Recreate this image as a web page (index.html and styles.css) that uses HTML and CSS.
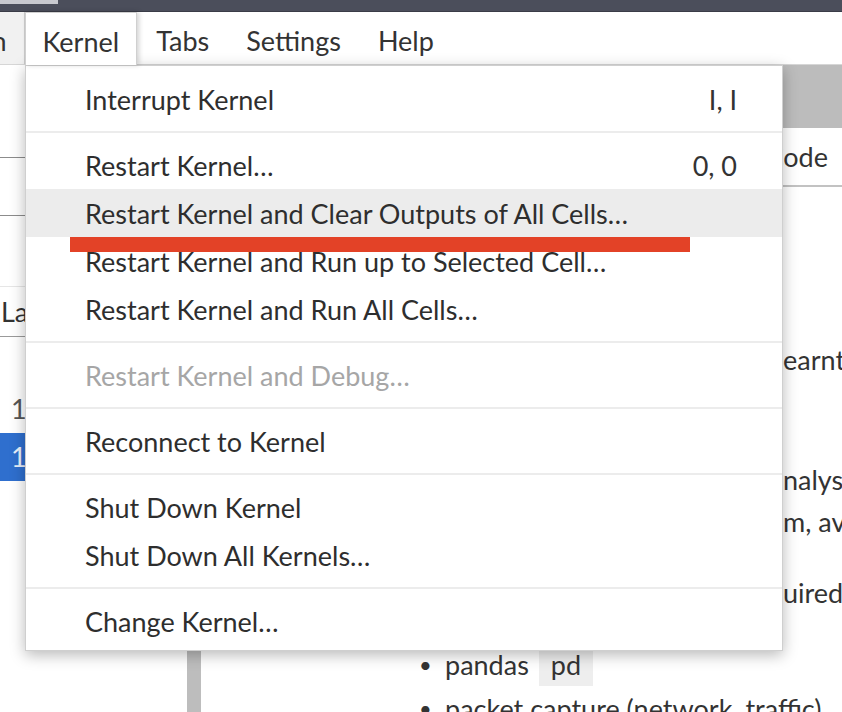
FILE: index.html
```html
<!DOCTYPE html>
<html lang="en">
<head>
<meta charset="utf-8">
<title>Kernel menu</title>
<link rel="stylesheet" href="styles.css">
</head>
<body>
<div class="app">
  <div class="topbar"><div class="topbar-left"></div></div>
  <nav class="menubar">
    <div class="mb-item mb-run">Run</div>
    <div class="mb-item mb-active">Kernel</div>
    <div class="mb-item">Tabs</div>
    <div class="mb-item">Settings</div>
    <div class="mb-item">Help</div>
  </nav>
  <div class="main">
    <aside class="sidebar">
      <div class="sb-tools"></div>
      <div class="sb-crumbs"></div>
      <div class="sb-filter"></div>
      <div class="sb-header">Last Modified</div>
      <div class="sb-row"></div>
      <div class="sb-row">1 day ago</div>
      <div class="sb-row sb-selected">1 day ago</div>
    </aside>
    <section class="notebook">
      <div class="nb-tabs"></div>
      <div class="nb-toolbar"><span class="celltype">Code</span></div>
      <div class="nb-content">
        <div class="collapser"></div>
        <div class="md">
          <div class="ln p1"><span class="hid"><span>In this notebook we put into practice what we have l</span></span><span>earnt</span></div>
          <div class="ln p2"><span class="hid"><span>We use a sample of network traffic data to perform an a</span></span><span>nalyse of the flows</span></div>
          <div class="ln"><span class="hid"><span>and compute simple statistics (minimum, maximu</span></span><span>m, average)</span></div>
          <div class="ln p3"><span class="hid"><span>The following libraries and data are req</span></span><span>uired:</span></div>
          <ul class="list">
            <li><span class="bullet">•</span><span>pandas</span><code class="code">pd</code></li>
            <li><span class="bullet">•</span><span>packet capture (network, traffic)</span></li>
          </ul>
        </div>
      </div>
    </section>
  </div>

  <div class="menu">
    <div class="mi"><span>Interrupt Kernel</span><span class="sc">I, I</span></div>
    <div class="sep"></div>
    <div class="mi"><span>Restart Kernel…</span><span class="sc">0, 0</span></div>
    <div class="mi mi-hover"><span>Restart Kernel and Clear Outputs of All Cells…</span></div>
    <div class="mi"><span>Restart Kernel and Run up to Selected Cell…</span></div>
    <div class="mi"><span>Restart Kernel and Run All Cells…</span></div>
    <div class="sep"></div>
    <div class="mi mi-disabled"><span>Restart Kernel and Debug…</span></div>
    <div class="sep"></div>
    <div class="mi"><span>Reconnect to Kernel</span></div>
    <div class="sep"></div>
    <div class="mi"><span>Shut Down Kernel</span></div>
    <div class="mi"><span>Shut Down All Kernels…</span></div>
    <div class="sep"></div>
    <div class="mi"><span>Change Kernel…</span></div>
  </div>

  <div class="annotation"></div>
</div>
</body>
</html>
```

FILE: styles.css
```css
* { box-sizing: border-box; margin: 0; padding: 0; }

html, body {
  width: 842px;
  height: 712px;
  overflow: hidden;
}

body {
  font-family: Lato, "Open Sans", "Noto Sans", sans-serif;
  font-size: 27px;
  color: #333333;
  background: #ffffff;
}

.app {
  position: relative;
  width: 842px;
  height: 712px;
  overflow: hidden;
  display: flex;
  flex-direction: column;
}

/* top dark bar */
.topbar {
  height: 12px;
  flex: none;
  background: #4b4e5b;
  border-bottom: 1px solid #3a3c47;
  display: flex;
}
.topbar-left {
  width: 58px;
  height: 4px;
  background: #c8c9cf;
}

/* menubar */
.menubar {
  height: 53px;
  flex: none;
  display: flex;
  align-items: stretch;
  background: #ffffff;
  border-bottom: 1px solid #d6d6d6;
}
.mb-item {
  display: flex;
  align-items: center;
  padding: 5px 18px 0 19px;
  color: #333333;
  white-space: nowrap;
}
.mb-run {
  margin-left: -59px;
  background: #f1f1f1;
  border-right: 1px solid #cccccc;
}
.mb-active {
  position: relative;
  z-index: 20;
  background: #ffffff;
  border: 1px solid #d0d0d0;
  border-bottom: none;
  margin-bottom: -1px;
  padding: 5px 17px 0 16px;
  box-shadow: 2px 0 5px rgba(0, 0, 0, 0.18);
}

/* main area */
.main {
  flex: 1;
  display: flex;
  min-height: 0;
}

.sidebar {
  width: 160px;
  flex: none;
  background: #ffffff;
  display: flex;
  flex-direction: column;
}
.sb-tools {
  height: 93px;
  border-bottom: 1px solid #8c8c8c;
}
.sb-crumbs {
  height: 58px;
  border-bottom: 1px solid #8c8c8c;
}
.sb-filter {
  height: 71px;
  border-bottom: 1px solid #e6e6e6;
}
.sb-header {
  height: 50px;
  line-height: 49px;
  padding-left: 1px;
  border-bottom: 1px solid #9a9a9a;
  color: #333333;
  white-space: nowrap;
}
.sb-row {
  height: 48px;
  line-height: 48px;
  padding-left: 11px;
  color: #555555;
  white-space: nowrap;
}
.sb-row:first-of-type { height: 50px; }
.sb-selected {
  background: #2f6fce;
  color: #e8f0fb;
}

.notebook {
  flex: 1;
  display: flex;
  flex-direction: column;
  min-width: 0;
}
.nb-tabs {
  height: 63px;
  flex: none;
  background: #bcbcbc;
}
.nb-toolbar {
  height: 59px;
  flex: none;
  display: flex;
  align-items: center;
  justify-content: flex-end;
  padding-right: 14px;
  background: #ffffff;
  border-bottom: 2px solid #c2c2c2;
}
.celltype { color: #333333; }

.nb-content {
  flex: 1;
  display: flex;
  padding-left: 27px;
}
.collapser {
  width: 14px;
  flex: none;
  background: #bdbdbd;
}
.md {
  flex: 1;
  padding-left: 29px;
  padding-top: 152px;
  min-width: 0;
}

.ln {
  display: flex;
  height: 42px;
  line-height: 42px;
  white-space: nowrap;
}
.hid {
  flex: none;
  width: 553px;
  display: flex;
  justify-content: flex-end;
  overflow: hidden;
}
.hid > span { flex: none; }
.p2 { margin-top: 78px; }
.p3 { margin-top: 29px; }

.list {
  list-style: none;
  margin-top: 30px;
}
.list li {
  display: flex;
  height: 42px;
  line-height: 42px;
  padding-left: 189px;
  white-space: nowrap;
}
.list li + li { margin-top: 2px; }
.bullet {
  width: 26px;
  flex: none;
  font-size: 22px;
}
.code {
  font-family: inherit;
  background: #eeeeee;
  padding: 0 12px;
  margin-left: 10px;
}

/* dropdown menu */
.menu {
  position: absolute;
  left: 25px;
  top: 65px;
  width: 758px;
  z-index: 10;
  background: #ffffff;
  border: 1px solid #cfcfcf;
  box-shadow: 0 4px 14px rgba(0, 0, 0, 0.28);
  padding: 9px 0 5px;
}
.mi {
  height: 48px;
  display: flex;
  align-items: center;
  justify-content: space-between;
  padding: 0 45px 0 59px;
  color: #2e2e2e;
  white-space: nowrap;
}
.mi > span:first-child { padding-top: 0; }
.mi-hover { background: #ececec; }
.mi-disabled { color: #a6a6a6; }
.sc { color: #333333; }
.sep {
  height: 2px;
  margin: 8px 0;
  background: #ececec;
}

/* red annotation underline */
.annotation {
  position: absolute;
  left: 70px;
  top: 237px;
  width: 620px;
  height: 15px;
  background: #e34227;
  z-index: 30;
}
```
